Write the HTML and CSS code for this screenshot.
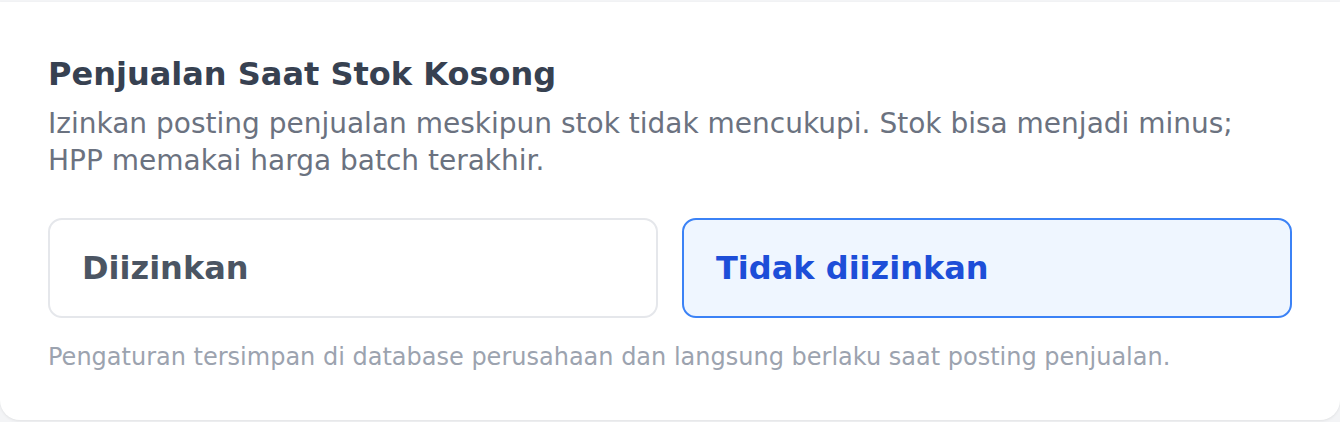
FILE: index.html
```html
<!DOCTYPE html>
<html lang="id">
<head>
<meta charset="utf-8">
<link rel="stylesheet" href="styles.css">
</head>
<body>
<div class="card">
  <h2 class="title">Penjualan Saat Stok Kosong</h2>
  <p class="desc">Izinkan posting penjualan meskipun stok tidak mencukupi. Stok bisa menjadi minus; HPP memakai harga batch terakhir.</p>
  <div class="options">
    <button class="opt">Diizinkan</button>
    <button class="opt opt-active">Tidak diizinkan</button>
  </div>
  <p class="note">Pengaturan tersimpan di database perusahaan dan langsung berlaku saat posting penjualan.</p>
</div>
</body>
</html>
```
FILE: styles.css
```css
html, body {
  margin: 0;
  padding: 0;
}
body {
  background: #f3f4f6;
  font-family: "DejaVu Sans", sans-serif;
  width: 1340px;
  height: 422px;
  overflow: hidden;
}
.card {
  margin-top: 2px;
  background: #ffffff;
  border-radius: 0 0 20px 20px;
  box-shadow: 0 1px 3px rgba(0,0,0,0.08);
  padding: 50px 48px 48px;
  height: 418px;
  box-sizing: border-box;
}
.title {
  margin: 0;
  font-size: 32px;
  font-weight: 700;
  color: #374151;
  line-height: 44px;
}
.desc {
  margin: 9px 0 0;
  font-size: 28px;
  line-height: 37px;
  color: #6b7280;
}
.options {
  display: grid;
  grid-template-columns: 1fr 1fr;
  gap: 24px;
  margin-top: 39px;
}
.opt {
  height: 100px;
  border: 2px solid #e5e7eb;
  border-radius: 14px;
  background: #ffffff;
  text-align: left;
  padding: 0 32px;
  font-family: "DejaVu Sans", sans-serif;
  font-size: 32px;
  font-weight: 700;
  color: #4b5563;
}
.opt-active {
  border-color: #3b82f6;
  background: #eff6ff;
  color: #1d4ed8;
}
.note {
  margin: 22px 0 0;
  font-size: 24px;
  line-height: 34px;
  color: #9ca3af;
}
```
